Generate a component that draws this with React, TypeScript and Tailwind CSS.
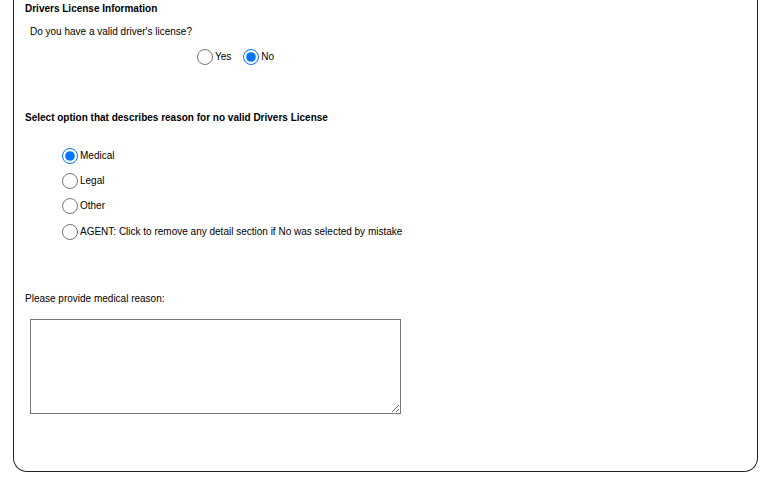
import { useState } from 'react'

const reasons = [
  { value: 'medical', label: 'Medical' },
  { value: 'legal', label: 'Legal' },
  { value: 'other', label: 'Other' },
  { value: 'agent', label: 'AGENT: Click to remove any detail section if No was selected by mistake' },
]

export default function App() {
  const [hasLicense, setHasLicense] = useState('no')
  const [reason, setReason] = useState('medical')
  const [details, setDetails] = useState('')

  return (
    <div className="min-h-[480px] bg-white text-black text-[10px] leading-[12px]" style={{ fontFamily: '"Liberation Sans", Arial, sans-serif' }}>
      <div className="ml-[13px] mr-[10px] flex flex-col border-x border-b border-[#222] rounded-b-[14px] pt-[3px] pb-[57px] pl-[11px]">
        <p className="font-bold">Drivers License Information</p>
        <p className="mt-[11px] pl-[5px]">Do you have a valid driver&apos;s license?</p>

        <div className="mt-[11px] ml-[172px] flex items-center h-[16px]">
          <label className="flex items-center">
            <input
              type="radio"
              name="license"
              className="m-0 w-[16px] h-[16px]"
              checked={hasLicense === 'yes'}
              onChange={() => setHasLicense('yes')}
            />
            <span className="ml-[2px]">Yes</span>
          </label>
          <label className="flex items-center ml-[12px]">
            <input
              type="radio"
              name="license"
              className="m-0 w-[16px] h-[16px]"
              checked={hasLicense === 'no'}
              onChange={() => setHasLicense('no')}
            />
            <span className="ml-[2px]">No</span>
          </label>
        </div>

        <p className="mt-[47px] font-bold">Select option that describes reason for no valid Drivers License</p>

        <div className="mt-[19px] ml-[37px] flex flex-col">
          {reasons.map((r) => (
            <label key={r.value} className="flex items-center h-[25.34px]">
              <input
                type="radio"
                name="reason"
                className="m-0 w-[16px] h-[16px]"
                checked={reason === r.value}
                onChange={() => setReason(r.value)}
              />
              <span className="ml-[2px]">{r.label}</span>
            </label>
          ))}
        </div>

        <p className="mt-[49px]">Please provide medical reason:</p>
        <textarea
          className="mt-[14px] ml-[5px] w-[371px] h-[95px] border border-[#767676] outline-none p-[2px]"
          value={details}
          onChange={(e) => setDetails(e.target.value)}
        />
      </div>
    </div>
  )
}
